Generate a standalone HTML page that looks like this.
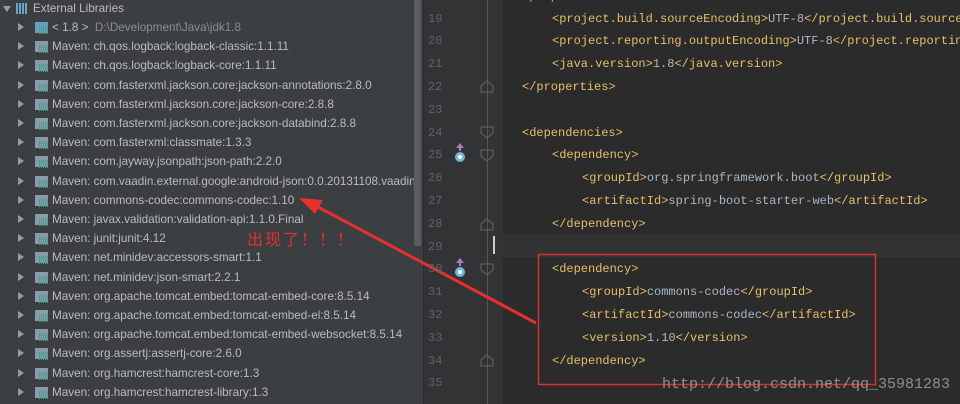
<!DOCTYPE html>
<html><head><meta charset="utf-8"><style>
*{margin:0;padding:0;box-sizing:border-box}
html,body{width:960px;height:404px;overflow:hidden}
body{background:#2b2b2b;position:relative;font-family:"Liberation Sans",sans-serif}
#left{position:absolute;left:0;top:0;width:423px;height:404px;background:#3c3f41;overflow:hidden}
.row{position:absolute;left:0;height:19px;line-height:19px;font-size:11.7px;color:#bbbbbb;white-space:nowrap;width:415px;overflow:hidden}
.arr{position:absolute;left:18px;top:5px;width:0;height:0;border-left:6px solid #9a9da0;border-top:4.5px solid transparent;border-bottom:4.5px solid transparent}
.ic{position:absolute;left:35px;top:4px;width:13px;height:11px;background:#8a9aa8}
.ic:after{content:"";position:absolute;left:4px;top:4px;width:9px;height:8px;background:repeating-linear-gradient(90deg,#4aa090 0 1px,transparent 1px 2px)}
.row span.t{position:absolute;left:52px}
#scroll{position:absolute;left:414px;top:0;width:7px;height:246px;background:#5a5d5f}
#gutter{position:absolute;left:423px;top:0;width:80px;height:404px;background:#313335;border-left:1px solid #2a2a2a}
.ln{position:absolute;left:428px;width:20px;font-family:"Liberation Mono",monospace;font-size:12px;color:#606366;height:23px;line-height:23px}
.code{position:absolute;font-family:"Liberation Mono",monospace;font-size:12px;color:#a9b7c6;white-space:pre;height:23px;line-height:23px}
.g{color:#e8bf6a}
#hl{position:absolute;left:503px;top:234px;width:457px;height:23px;background:#323232}
</style></head><body>
<div id="left">
<div class="row" style="top:-1px"><div class="arr" style="left:3px;border-left:none;border-top:6px solid #9a9da0;border-left:4.5px solid transparent;border-right:4.5px solid transparent;border-bottom:none;top:7px"></div><div style="position:absolute;left:16px;top:4px;width:11px;height:11px;background:repeating-linear-gradient(90deg,#6aa6c8 0 2px,transparent 2px 3px)"></div><span class="t" style="left:33px">External Libraries</span></div>
</div>
<div id="scroll"></div>
<div id="gutter"></div>
<div id="hl"></div>
<div style="position:absolute;left:487px;top:0;width:1px;height:404px;background:#555"></div>
<div style="position:absolute;left:493px;top:236px;width:2px;height:18px;background:#ccc"></div>
<svg width="960" height="404" style="position:absolute;left:0;top:0">
<g fill="none" stroke="#666" stroke-width="1">
<path d="M481 92h12v-6l-6-5l-6 5z"/><path d="M481 127h12v6l-6 5l-6-5z"/><path d="M481 150h12v6l-6 5l-6-5z"/><path d="M481 230h12v-6l-6-5l-6 5z"/><path d="M481 264h12v6l-6 5l-6-5z"/><path d="M481 366h12v-6l-6-5l-6 5z"/>
</g>
<g><path d="M460 143l-4 5h8z" fill="#b07ac0"/><rect x="459" y="147" width="2" height="4" fill="#b07ac0"/><circle cx="460" cy="157" r="5" fill="#6fb8d8"/><circle cx="460" cy="157" r="2" fill="#fff"/>
<path d="M460 258l-4 5h8z" fill="#b07ac0"/><rect x="459" y="262" width="2" height="4" fill="#b07ac0"/><circle cx="460" cy="272" r="5" fill="#6fb8d8"/><circle cx="460" cy="272" r="2" fill="#fff"/></g>
<rect x="538.5" y="254.5" width="337" height="130" fill="none" stroke="#d83030" stroke-width="1.5"/>
<line x1="536" y1="323" x2="318" y2="207" stroke="#e53030" stroke-width="3"/>
<path d="M299 198l24 2l-8 14z" fill="#e53030"/>
</svg>
<div style="position:absolute;left:247px;top:226px;font-family:'Liberation Sans','Noto Sans CJK SC',sans-serif;font-size:16px;color:#e03030;letter-spacing:2px">出现了！！！</div>
<div style="position:absolute;left:662px;top:376px;font-family:'Liberation Mono',monospace;font-size:15px;color:#a0a0a0;opacity:.85">http://blog.csdn.net/qq_35981283</div>
<div id="lines"></div>
<script>
var libs=["< 1.8 >  D:\\Development\\Java\\jdk1.8","Maven: ch.qos.logback:logback-classic:1.1.11","Maven: ch.qos.logback:logback-core:1.1.11","Maven: com.fasterxml.jackson.core:jackson-annotations:2.8.0","Maven: com.fasterxml.jackson.core:jackson-core:2.8.8","Maven: com.fasterxml.jackson.core:jackson-databind:2.8.8","Maven: com.fasterxml:classmate:1.3.3","Maven: com.jayway.jsonpath:json-path:2.2.0","Maven: com.vaadin.external.google:android-json:0.0.20131108.vaadin1","Maven: commons-codec:commons-codec:1.10","Maven: javax.validation:validation-api:1.1.0.Final","Maven: junit:junit:4.12","Maven: net.minidev:accessors-smart:1.1","Maven: net.minidev:json-smart:2.2.1","Maven: org.apache.tomcat.embed:tomcat-embed-core:8.5.14","Maven: org.apache.tomcat.embed:tomcat-embed-el:8.5.14","Maven: org.apache.tomcat.embed:tomcat-embed-websocket:8.5.14","Maven: org.assertj:assertj-core:2.6.0","Maven: org.hamcrest:hamcrest-core:1.3","Maven: org.hamcrest:hamcrest-library:1.3"];
var h="";
libs.forEach(function(s,i){var top=18+i*19.2;var t=s.replace(/</g,"&lt;").replace(/>/g,"&gt;");if(i==0)t='&lt; 1.8 &gt; <span style="color:#8c8c8c">&nbsp;D:\\Development\\Java\\jdk1.8</span>';h+='<div class="row" style="top:'+top+'px"><div class="arr"></div><div class="ic"'+(i==0?' style="background:#6a9ec0"':'')+'></div><span class="t">'+t+'</span></div>';});
document.getElementById("left").innerHTML+=h;
function g(s){return '<span class="g">'+s.replace(/</g,"&lt;").replace(/>/g,"&gt;")+'</span>';}
var L=[[18,522,g("<properties>")],[19,552,g("<project.build.sourceEncoding>")+"UTF-8"+g("</project.build.sourceEncoding>")],[20,552,g("<project.reporting.outputEncoding>")+"UTF-8"+g("</project.reporting.outputEncoding>")],[21,552,g("<java.version>")+"1.8"+g("</java.version>")],[22,522,g("</properties>")],[23,0,""],[24,522,g("<dependencies>")],[25,552,g("<dependency>")],[26,582,g("<groupId>")+"org.springframework.boot"+g("</groupId>")],[27,582,g("<artifactId>")+"spring-boot-starter-web"+g("</artifactId>")],[28,552,g("</dependency>")],[29,0,""],[30,552,g("<dependency>")],[31,582,g("<groupId>")+"commons-codec"+g("</groupId>")],[32,582,g("<artifactId>")+"commons-codec"+g("</artifactId>")],[33,582,g("<version>")+"1.10"+g("</version>")],[34,552,g("</dependency>")],[35,0,""]];
var o="";
L.forEach(function(a){var top=(a[0]-19)*22.8+7.5;o+='<div class="ln" style="top:'+top+'px">'+a[0]+'</div>';if(a[2])o+='<div class="code" style="left:'+a[1]+'px;top:'+top+'px">'+a[2]+'</div>';});
document.getElementById("lines").innerHTML=o;
</script>
</body></html>
